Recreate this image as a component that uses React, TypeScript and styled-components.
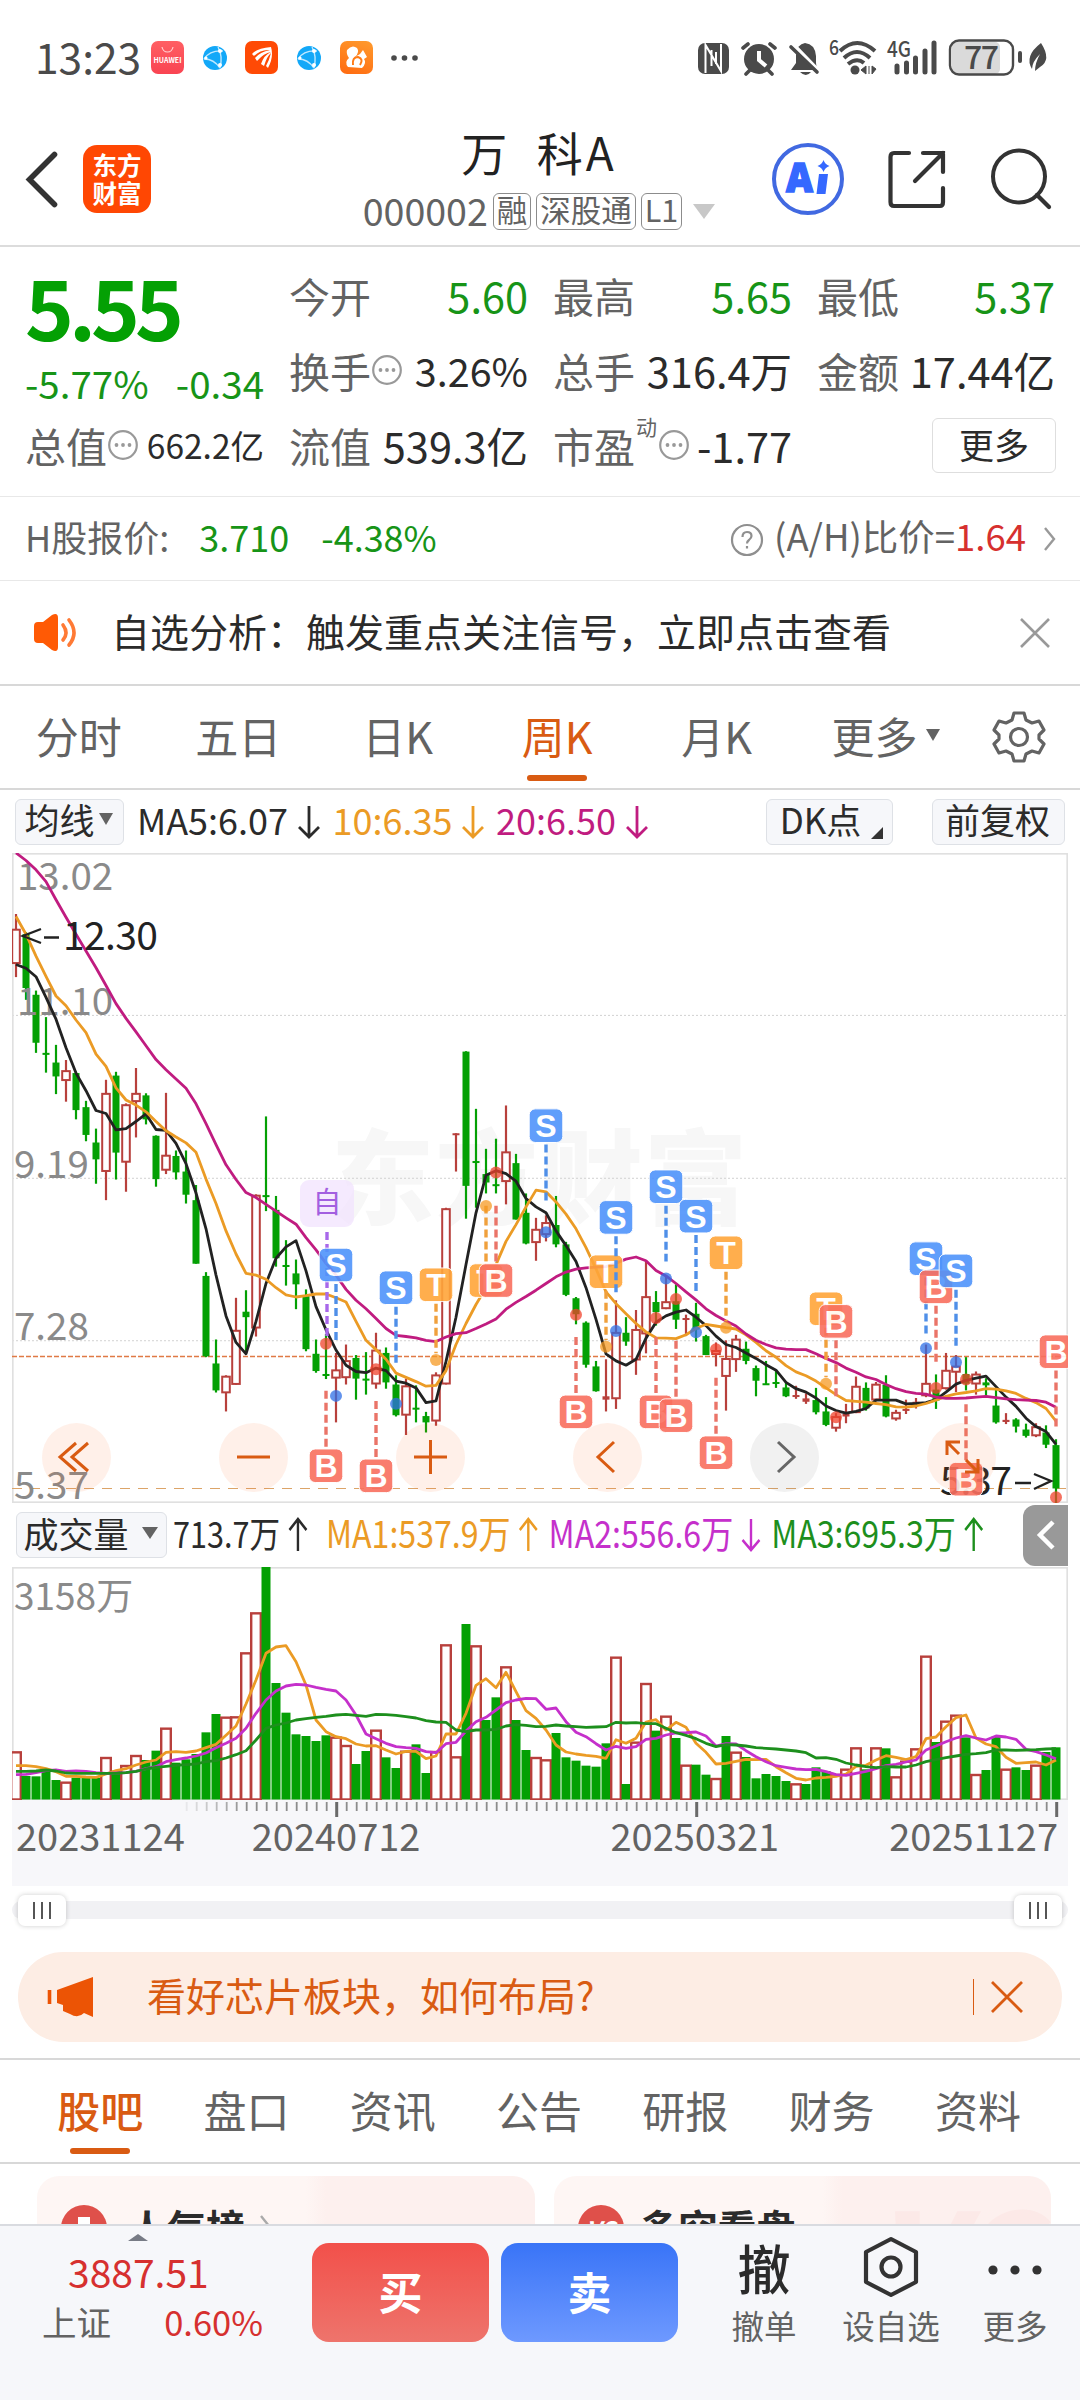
import React from 'react';
import styled, { createGlobalStyle } from 'styled-components';

const GREEN = '#04a004';
const TEXT_GREEN = '#179417';
const RED = '#b8403c';
const TEXT_RED = '#d6302f';
const ORANGE = '#d95b12';
const MA_ORANGE = '#eb9b25';
const MA_PINK = '#c01c80';
const MA_PURPLE = '#c530cb';
const DARK = '#2b2b2b';
const GRAY = '#636363';

const STEP = 10;
const FIRST_X = 16;
const toX = (i: number) => FIRST_X + i * STEP;
const priceY = (v: number) => 850 + v / 2.376;
const volumeY = (v: number) => 1500 + v / 3;

type Candle = [string, number, number, number, number];

// direction, high, body top, body bottom, low
const CANDLES: Candle[] = [
  ['r', 152, 187, 271, 302], ['g', 195, 200, 328, 356], ['g', 334, 344, 458, 482],
  ['g', 397, 482, 485, 529], ['g', 463, 505, 538, 580], ['r', 499, 523, 549, 598],
  ['g', 527, 530, 618, 640], ['g', 596, 611, 677, 692], ['g', 662, 695, 735, 793],
  ['r', 546, 577, 765, 832], ['g', 527, 536, 719, 783], ['r', 602, 604, 743, 812],
  ['r', 518, 577, 599, 683], ['g', 578, 583, 640, 652], ['g', 678, 679, 782, 800],
  ['r', 577, 724, 762, 770], ['g', 714, 727, 766, 783], ['g', 714, 764, 819, 840],
  ['g', 796, 832, 983, 983], ['g', 1003, 1012, 1203, 1205], ['g', 1163, 1220, 1284, 1289],
  ['r', 1248, 1249, 1291, 1334], ['r', 1064, 1140, 1271, 1271], ['g', 1046, 1097, 1110, 1197],
  ['r', 818, 819, 1137, 1156], ['g', 633, 820, 824, 858], ['g', 822, 855, 970, 990],
  ['g', 927, 986, 989, 1035], ['g', 973, 1006, 1032, 1091], ['g', 1044, 1060, 1186, 1191],
  ['g', 1163, 1197, 1238, 1242], ['g', 1150, 1245, 1248, 1257], ['r', 1195, 1234, 1256, 1360],
  ['r', 1175, 1212, 1255, 1270], ['g', 1200, 1207, 1256, 1306], ['g', 1193, 1256, 1260, 1294],
  ['r', 1147, 1187, 1270, 1280], ['g', 1182, 1195, 1265, 1280], ['g', 1248, 1270, 1343, 1346],
  ['r', 1256, 1272, 1344, 1390], ['g', 1272, 1325, 1329, 1360], ['g', 1335, 1345, 1360, 1384],
  ['r', 1241, 1246, 1358, 1368], ['r', 850, 851, 1270, 1270], ['r', 673, 673, 676, 764],
  ['g', 478, 479, 798, 876], ['g', 615, 739, 743, 850], ['g', 710, 770, 790, 816],
  ['g', 686, 794, 797, 816], ['r', 607, 716, 789, 842], ['g', 722, 744, 878, 878],
  ['g', 816, 862, 935, 937], ['r', 874, 900, 934, 976], ['r', 868, 884, 915, 930],
  ['g', 822, 891, 937, 944], ['g', 931, 937, 1057, 1060], ['g', 1062, 1065, 1103, 1127],
  ['g', 1120, 1123, 1223, 1230], ['g', 1214, 1227, 1286, 1287], ['r', 1210, 1298, 1306, 1334],
  ['r', 1070, 1145, 1305, 1328], ['g', 1110, 1147, 1168, 1178], ['r', 1093, 1138, 1213, 1247],
  ['r', 975, 1060, 1151, 1196], ['g', 1048, 1074, 1098, 1130], ['r', 1010, 1072, 1091, 1091],
  ['g', 1032, 1072, 1116, 1138], ['r', 1104, 1112, 1116, 1155], ['g', 1076, 1102, 1139, 1168],
  ['g', 1152, 1155, 1200, 1200], ['r', 1170, 1188, 1200, 1227], ['r', 1165, 1207, 1252, 1332],
  ['r', 1152, 1161, 1212, 1240], ['g', 1168, 1185, 1214, 1222], ['g', 1225, 1231, 1261, 1298],
  ['g', 1214, 1267, 1270, 1270], ['g', 1238, 1264, 1268, 1278], ['g', 1264, 1277, 1298, 1300],
  ['r', 1273, 1295, 1298, 1304], ['r', 1291, 1303, 1311, 1316], ['g', 1278, 1307, 1336, 1341],
  ['g', 1300, 1334, 1366, 1369], ['r', 1338, 1345, 1375, 1382], ['r', 1316, 1340, 1346, 1362],
  ['r', 1251, 1273, 1338, 1338], ['g', 1265, 1278, 1327, 1332], ['r', 1264, 1268, 1308, 1310],
  ['g', 1248, 1271, 1346, 1348], ['r', 1330, 1335, 1353, 1356], ['r', 1306, 1328, 1332, 1340],
  ['r', 1302, 1311, 1315, 1327], ['r', 1175, 1266, 1298, 1300], ['g', 1246, 1282, 1308, 1328],
  ['r', 1195, 1235, 1281, 1282], ['r', 1200, 1225, 1242, 1288], ['g', 1205, 1245, 1268, 1284],
  ['r', 1239, 1244, 1270, 1294], ['g', 1255, 1265, 1272, 1302], ['g', 1282, 1320, 1360, 1363],
  ['r', 1338, 1354, 1359, 1364], ['g', 1350, 1353, 1370, 1384], ['g', 1363, 1377, 1392, 1396],
  ['r', 1362, 1369, 1393, 1395], ['g', 1367, 1384, 1413, 1421], ['g', 1400, 1414, 1517, 1552],
];

const MA5 = [
  272, 281, 301, 350, 402, 470, 530, 572, 619, 626, 665, 662, 645, 627, 664, 666, 697, 745, 815,
  900, 1010, 1107, 1170, 1197, 1120, 1030, 970, 943, 928, 1000, 1085, 1140, 1188, 1224, 1239, 1242,
  1231, 1237, 1262, 1267, 1278, 1313, 1309, 1215, 1110, 985, 862, 773, 762, 769, 787, 828, 848, 862,
  905, 940, 978, 1040, 1115, 1197, 1214, 1224, 1210, 1160, 1122, 1107, 1098, 1093, 1110, 1130, 1155,
  1175, 1182, 1195, 1208, 1223, 1236, 1265, 1280, 1288, 1302, 1321, 1332, 1338, 1334, 1327, 1307,
  1307, 1307, 1316, 1315, 1313, 1306, 1288, 1269, 1260, 1255, 1250, 1275, 1300, 1322, 1350, 1370,
  1382, 1412,
];

const MA10 = [
  158, 200, 252, 300, 347, 370, 404, 434, 485, 514, 565, 594, 606, 622, 645, 667, 682, 696, 718,
  782, 840, 905, 960, 1006, 1010, 1020, 1040, 1057, 1062, 1059, 1055, 1055, 1064, 1074, 1120, 1165,
  1187, 1210, 1243, 1253, 1263, 1274, 1272, 1237, 1175, 1125, 1080, 1040, 985, 930, 890, 848, 808,
  812, 836, 865, 900, 945, 995, 1050, 1078, 1102, 1125, 1145, 1159, 1160, 1161, 1152, 1137, 1127,
  1131, 1135, 1138, 1152, 1170, 1190, 1205, 1225, 1240, 1249, 1262, 1278, 1294, 1308, 1310, 1312,
  1315, 1318, 1323, 1324, 1321, 1315, 1307, 1298, 1292, 1289, 1285, 1280, 1281, 1285, 1291, 1303,
  1313, 1327, 1357,
];

const MA20 = [
  7, 25, 47, 75, 118, 160, 200, 240, 280, 322, 365, 400, 432, 465, 498, 522, 544, 566, 603, 650,
  700, 748, 783, 814, 826, 842, 858, 874, 889, 921, 950, 982, 1010, 1044, 1070, 1090, 1113, 1137,
  1153, 1156, 1159, 1165, 1168, 1157, 1149, 1147, 1137, 1126, 1114, 1091, 1075, 1061, 1046, 1030,
  1014, 1003, 996, 993, 991, 990, 982, 972, 967, 976, 999, 1012, 1030, 1050, 1069, 1090, 1106, 1119,
  1131, 1150, 1165, 1175, 1183, 1186, 1187, 1187, 1197, 1208, 1218, 1231, 1241, 1252, 1258, 1270,
  1280, 1287, 1291, 1293, 1300, 1303, 1303, 1302, 1300, 1298, 1301, 1304, 1306, 1307, 1308, 1312,
  1324,
];

const VOLUMES = [
  754, 828, 829, 812, 840, 845, 833, 830, 833, 771, 812, 795, 765, 780, 752, 683, 788, 778, 762,
  697, 642, 650, 649, 457, 337, 201, 549, 638, 703, 708, 723, 706, 710, 735, 792, 753, 689, 772,
  804, 752, 733, 819, 753, 433, 769, 372, 436, 660, 592, 499, 660, 750, 771, 778, 699, 772, 782,
  797, 800, 730, 470, 852, 725, 549, 692, 647, 714, 794, 794, 824, 834, 708, 755, 771, 835, 822,
  828, 843, 850, 852, 802, 813, 822, 806, 742, 808, 742, 745, 829, 782, 745, 467, 726, 662, 644,
  712, 822, 810, 710, 806, 802, 810, 794, 756, 742,
];

// hollow volume bars, by week
const VOLUME_UP = [
  0, 5, 9, 11, 12, 15, 21, 22, 23, 24, 32, 33, 36, 39, 42, 43, 44, 46, 49, 52, 53, 60, 62, 63, 65,
  67, 70, 72, 78, 82, 83, 84, 86, 88, 89, 90, 91, 93, 94, 96, 99, 102,
];

const VMA1 = [
  797, 797, 800, 806, 815, 829, 829, 831, 832, 822, 812, 806, 795, 786, 780, 757, 755, 757, 753,
  743, 733, 706, 678, 612, 540, 460, 441, 437, 485, 555, 660, 695, 710, 716, 732, 738, 737, 750,
  762, 754, 754, 776, 768, 702, 702, 640, 556, 536, 563, 517, 575, 632, 655, 690, 735, 756, 762,
  766, 769, 775, 719, 730, 715, 666, 659, 690, 667, 682, 730, 757, 792, 790, 784, 778, 779, 778,
  800, 818, 835, 840, 834, 832, 829, 822, 799, 796, 780, 767, 772, 779, 770, 716, 711, 680, 653,
  645, 714, 732, 740, 772, 790, 788, 786, 795, 780,
];

const VMA2 = [
  824, 823, 818, 812, 810, 814, 813, 814, 818, 820, 819, 818, 814, 806, 800, 785, 779, 774, 768,
  759, 743, 730, 715, 685, 640, 600, 573, 558, 553, 555, 562, 568, 573, 600, 645, 702, 716, 730,
  740, 743, 745, 755, 758, 731, 727, 693, 665, 652, 630, 608, 600, 595, 596, 628, 624, 665, 697,
  710, 731, 750, 739, 745, 740, 718, 715, 705, 699, 698, 696, 708, 738, 731, 732, 752, 770, 785,
  797, 802, 807, 809, 808, 815, 824, 826, 820, 814, 806, 797, 793, 786, 780, 750, 738, 725, 714,
  707, 714, 720, 708, 711, 718, 748, 755, 765, 776,
];

const VMA3 = [
  814, 814, 813, 810, 813, 819, 820, 820, 820, 820, 820, 818, 814, 807, 802, 799, 796, 794, 792,
  785, 782, 774, 764, 752, 720, 685, 675, 669, 660, 656, 652, 649, 645, 643, 646, 649, 643, 644,
  646, 650, 654, 662, 666, 667, 690, 695, 690, 690, 688, 678, 674, 676, 680, 679, 675, 678, 680,
  682, 681, 680, 667, 669, 668, 671, 671, 685, 698, 706, 716, 730, 740, 734, 735, 738, 743, 745,
  747, 750, 753, 758, 774, 773, 778, 789, 795, 800, 803, 800, 801, 801, 795, 785, 779, 773, 768,
  763, 761, 758, 750, 750, 751, 750, 749, 747, 746,
];

type Signal = { i: number; kind: 'S' | 'B' | 'T'; y: number; dot: number };

const SIGNALS: Signal[] = [
  { i: 32, kind: 'S', y: 986, dot: 1297 },
  { i: 31, kind: 'B', y: 1463, dot: 1173 },
  { i: 36, kind: 'B', y: 1487, dot: 1234 },
  { i: 38, kind: 'S', y: 1040, dot: 1316 },
  { i: 42, kind: 'T', y: 1033, dot: 1212 },
  { i: 47, kind: 'T', y: 1023, dot: 846 },
  { i: 48, kind: 'B', y: 1023, dot: 766 },
  { i: 53, kind: 'S', y: 655, dot: 908 },
  { i: 56, kind: 'B', y: 1335, dot: 1104 },
  { i: 59, kind: 'T', y: 1002, dot: 1180 },
  { i: 60, kind: 'S', y: 873, dot: 1143 },
  { i: 64, kind: 'B', y: 1335, dot: 1112 },
  { i: 65, kind: 'S', y: 800, dot: 1018 },
  { i: 66, kind: 'B', y: 1344, dot: 1067 },
  { i: 68, kind: 'S', y: 870, dot: 1146 },
  { i: 70, kind: 'B', y: 1432, dot: 1186 },
  { i: 71, kind: 'T', y: 957, dot: 1135 },
  { i: 81, kind: 'T', y: 1090, dot: 1268 },
  { i: 82, kind: 'B', y: 1120, dot: 1348 },
  { i: 91, kind: 'S', y: 971, dot: 1184 },
  { i: 92, kind: 'B', y: 1038, dot: 1278 },
  { i: 94, kind: 'S', y: 1000, dot: 1217 },
  { i: 95, kind: 'B', y: 1495, dot: 1258 },
  { i: 104, kind: 'B', y: 1192, dot: 1538 },
];

const SIGNAL_COLORS = { S: '#4f94fb', B: '#f96f5f', T: '#ffa63a' };
const LINE_COLORS = { S: '#4f8fe8', B: '#ea7468', T: '#f0a03c' };
const DOT_COLORS = { S: '#2f6fe6', B: '#f0432c', T: '#f59a23' };

const linePoints = (values: number[], scale: (v: number) => number) =>
  values.map((v, i) => `${toX(i)},${scale(v).toFixed(1)}`).join(' ');

const SignalMark: React.FC<{ signal: Signal }> = ({ signal }) => {
  const { i, kind, y, dot } = signal;
  const x = toX(i);
  const dir = dot > y ? 1 : -1;
  const length = kind === 'T' && dot > y ? 118 : 133;
  return (
    <g>
      <line
        x1={x}
        x2={x}
        y1={priceY(y + dir * 45)}
        y2={priceY(y + dir * (45 + length))}
        stroke={LINE_COLORS[kind]}
        strokeWidth={3.4}
        strokeDasharray="8 4"
      />
      <circle cx={x} cy={priceY(dot)} r={6} fill={DOT_COLORS[kind]} opacity={0.75} />
      <g opacity={0.9}>
        <rect
          x={x - 16.8}
          y={priceY(y) - 16.8}
          width={33.6}
          height={33.6}
          rx={6}
          fill={SIGNAL_COLORS[kind]}
          stroke="#fff"
          strokeWidth={1}
        />
        <text
          x={x}
          y={priceY(y) + 11.5}
          fill="#fff"
          fontSize={32}
          fontWeight={700}
          fontFamily='"Liberation Sans", sans-serif'
          textAnchor="middle"
        >
          {kind}
        </text>
      </g>
    </g>
  );
};

const PriceChart: React.FC = () => (
  <svg width="1056" height="650" viewBox="12 853 1056 650">
    <text x="331" y="1217" fontSize="103" fontWeight="900" fill="#f7f7f7" textLength="416">
      东方财富
    </text>
    {[393, 780, 1166].map((v) => (
      <line key={v} x1="12" x2="1068" y1={priceY(v)} y2={priceY(v)} stroke="#d2d2d2" strokeDasharray="2 2" />
    ))}
    <rect x="12.75" y="853.75" width="1054.5" height="648.5" fill="none" stroke="#e0e0e0" strokeWidth="1.8" />
    <line x1="12" x2="1068" y1="1356.5" y2="1356.5" stroke="#e07a45" strokeWidth="1.4" strokeDasharray="5 2" />
    <line x1="12" x2="1068" y1="1488.5" y2="1488.5" stroke="#dca468" strokeWidth="1.2" strokeDasharray="10 8" />
    {CANDLES.map(([dir, high, top, bottom, low], i) => {
      const x = toX(i);
      const color = dir === 'r' ? RED : GREEN;
      const y1 = priceY(top);
      const y2 = priceY(bottom);
      const flat = y2 - y1 < 4;
      return (
        <g key={i}>
          <line x1={x} x2={x} y1={priceY(high)} y2={priceY(low)} stroke={color} strokeWidth="2.2" />
          {dir === 'r' && !flat ? (
            <rect x={x - 3.8} y={y1 + 1} width="7.6" height={y2 - y1 - 2} fill="#fff" stroke={color} strokeWidth="2" />
          ) : (
            <rect x={x - 3.5} y={y1} width="7" height={Math.max(y2 - y1, 2)} fill={color} />
          )}
        </g>
      );
    })}
    <g fontSize="38.5" fill="#8a8a8a">
      <text x="17" y="890">13.02</text>
      <text x="17" y="1015">11.10</text>
      <text x="14" y="1178">9.19</text>
      <text x="14" y="1340">7.28</text>
      <text x="14" y="1499">5.37</text>
    </g>
    <g fill="none" strokeWidth="2.8" strokeLinejoin="round">
      <polyline points={linePoints(MA5, priceY)} stroke="#222" />
      <polyline points={linePoints(MA10, priceY)} stroke={MA_ORANGE} />
      <polyline points={linePoints(MA20, priceY)} stroke={MA_PINK} />
    </g>
    <g fontSize="39" fill="#222">
      <path d="M41 911L23 918L41 925M44 919.5H59" transform="translate(0 18)" fill="none" stroke="#222" strokeWidth="2.4" />
      <text x="63" y="950" textLength="95">12.30</text>
      <text x="940" y="1495" textLength="72">5.37</text>
      <path d="M1015 1483H1031M1034 1474L1051 1481L1034 1489" fill="none" stroke="#222" strokeWidth="2.4" />
    </g>
    <rect x="300" y="1180" width="54" height="47" rx="9" fill="#f1e3fe" opacity="0.75" />
    <text x="327" y="1213" fontSize="29" fill="#a35fe0" textAnchor="middle">
      自
    </text>
    <line x1="327" x2="327" y1="1232" y2="1336" stroke="#a868ea" strokeWidth="3.4" strokeDasharray="8 4" />
    {SIGNALS.map((s) => (
      <SignalMark key={s.i} signal={s} />
    ))}
  </svg>
);

const VolumeChart: React.FC = () => (
  <svg width="1056" height="233" viewBox="12 1567 1056 233">
    <rect x="12.75" y="1567.75" width="1054.5" height="231.5" fill="none" stroke="#e0e0e0" strokeWidth="1.8" />
    {VOLUMES.map((v, i) => {
      const up = VOLUME_UP.includes(i);
      const y = volumeY(v);
      return up ? (
        <rect key={i} x={toX(i) - 4.8} y={y + 1} width="9.6" height={1798.5 - y} fill="#fff" stroke={RED} strokeWidth="2.4" />
      ) : (
        <rect key={i} x={toX(i) - 4.5} y={y} width="9" height={1799.5 - y} fill={GREEN} />
      );
    })}
    <text x="14" y="1610" fontSize="37" fill="#8a8a8a">
      3158万
    </text>
    <g fill="none" strokeWidth="2.8" strokeLinejoin="round">
      <polyline points={linePoints(VMA1, volumeY)} stroke={MA_ORANGE} />
      <polyline points={linePoints(VMA2, volumeY)} stroke={MA_PURPLE} />
      <polyline points={linePoints(VMA3, volumeY)} stroke="#1d8f1d" />
    </g>
  </svg>
);

const AxisTicks: React.FC = () => (
  <svg width="1056" height="17" viewBox="12 1800 1056 17">
    {VOLUMES.map((_, i) => {
      const major = i === 32 || i === 68 || i === 104;
      if (i < 17) return null;
      return (
        <line
          key={i}
          x1={toX(i) + 0.7}
          x2={toX(i) + 0.7}
          y1="1802"
          y2={major ? 1817 : 1811}
          stroke={major ? '#6a6a6a' : '#8c8c8c'}
          strokeWidth={major ? 3 : 1.8}
          opacity={Math.min(1, (i - 16) / 7)}
        />
      );
    })}
  </svg>
);

const Arrow: React.FC<{ up?: boolean; color: string; width?: number }> = ({ up, color, width = 43.5 }) => (
  <svg width={width} height="36" viewBox={`0 0 ${width} 36`}>
    <path
      d={up ? 'M21 34V2M11 13L21 2L31 13' : 'M21 2V33M11 23L21 33L31 23'}
      fill="none"
      stroke={color}
      strokeWidth="2.8"
    />
  </svg>
);

const InfoDots: React.FC = () => (
  <svg width="32" height="32" viewBox="0 0 32 32">
    <circle cx="16" cy="14" r="13.800" fill="none" stroke="#999" strokeWidth="2.200" />
    <g fill="#999">
      <circle cx="9.500" cy="14" r="1.900" />
      <circle cx="16" cy="14" r="1.900" />
      <circle cx="22.500" cy="14" r="1.900" />
    </g>
  </svg>
);

const GlobeIcon: React.FC = () => (
  <svg width="24" height="24" viewBox="0 0 24 24">
    <circle cx="12" cy="12" r="12" fill="#13a8f8" />
    <path d="M1 13Q7 4 20 5M1 13Q11 13 17 22M15 1Q20 10 17 22" fill="none" stroke="#bfe8ff" strokeWidth="1.4" />
    <circle cx="17" cy="5" r="2" fill="#fff" />
    <circle cx="3" cy="12" r="1.6" fill="#fff" />
    <circle cx="17" cy="19" r="2" fill="#fff" />
  </svg>
);

const SystemIcons: React.FC = () => (
  <svg width="356" height="40" viewBox="696 38 356 40">
    <rect x="698" y="43" width="31" height="31" rx="7" fill="#4a4a4a" />
    <path d="M705.500 73V45L721 71V44M711.500 50V66M716 52V64" fill="none" stroke="#fff" strokeWidth="2" />
    <g fill="#4a4a4a" stroke="#4a4a4a" strokeLinecap="round">
      <circle cx="759" cy="59" r="15" stroke="none" />
      <path d="M743 48L748 44M775 48L770 44M746 74L750 70M772 74L768 70" strokeWidth="3.6" />
      <path d="M759 51V60L766 66" fill="none" stroke="#fff" strokeWidth="4" strokeLinecap="butt" />
      <path d="M791 70L796 63V55Q797 44 805 43Q815 44 816 56V63L817 70Z" stroke="none" />
      <path d="M800 72H811Q806 78 800 72Z" stroke="none" />
      <path d="M792 44L820 73" stroke="#fff" strokeWidth="5" />
      <path d="M791 47L817 72" strokeWidth="3.6" />
    </g>
    <g fill="none" stroke="#4a4a4a" strokeWidth="4">
      <path d="M840 51Q857 35 875 51" />
      <path d="M844 58Q857 46 870 58" />
      <path d="M848 64Q857 57 864 63" />
    </g>
    <circle cx="855" cy="70" r="4.500" fill="#4a4a4a" />
    <path d="M866 66V74L861 70ZM869 66V74M872 66V74L876 69Z" fill="#4a4a4a" stroke="#4a4a4a" strokeWidth="1" />
    <g fill="#4a4a4a" fontWeight="500">
      <text x="829" y="55" fontSize="20" textLength="10" lengthAdjust="spacingAndGlyphs">6</text>
      <text x="887" y="57" fontSize="22" textLength="24" lengthAdjust="spacingAndGlyphs">4G</text>
    </g>
    <path d="M897 66V72M906.500 63V72M915.500 58V72M925 51V72M934 43V72" stroke="#4a4a4a" strokeWidth="5" strokeLinecap="round" />
    <rect x="952" y="42" width="48" height="32" rx="5" fill="#dadada" />
    <rect x="950" y="40.500" width="63" height="34" rx="9" fill="none" stroke="#4a4a4a" strokeWidth="2.4" />
    <path d="M1020 53V61" stroke="#4a4a4a" strokeWidth="4" strokeLinecap="round" />
    <text x="964" y="69" fontSize="32" fontWeight="500" fill="#4a4a4a" textLength="35">
      77
    </text>
    <path d="M1041 43Q1052 60 1040 67L1035 71Q1035 63 1040 54Q1032 62 1032 69Q1024 56 1041 43Z" fill="#4a4a4a" />
  </svg>
);

const SITE_TABS = ['股吧', '盘口', '资讯', '公告', '研报', '财务', '资料'];
const PERIODS = ['分时', '五日', '日K', '周K', '月K'];

export default function App() {
  return (
    <Page>
      <GlobalStyle />
      <StatusBar>
        <Clock>13:23</Clock>
        <AppBadges>
          <AppBadge $bg="linear-gradient(#ff5f63, #f94452)">
            <svg width="33" height="33" viewBox="0 0 33 33">
              <path d="M11 6Q12 11 16.500 11Q21 11 22 6" fill="none" stroke="#ffd0d0" strokeWidth="1.200" />
              <text x="16.500" y="21.500" fontSize="7" fontWeight="700" fill="#fff" textAnchor="middle">
                HUAWEI
              </text>
            </svg>
          </AppBadge>
          <GlobeIcon />
          <AppBadge $bg="#ff4a05">
            <svg width="33" height="33" viewBox="0 0 33 33">
              <path
                d="M26 6Q12 7 7 13L9 15Q16 8 25 9Q15 11 10 17L12 20Q19 12 26 11Q19 14 16 23L19 25Q22 15 26 12Q24 20 21 25L23 27Q29 16 26 6Z"
                fill="#fff"
              />
            </svg>
          </AppBadge>
          <GlobeIcon />
          <AppBadge $bg="linear-gradient(200deg, #ff9b2e, #ff6a10)">
            <svg width="33" height="33" viewBox="0 0 33 33">
              <path
                d="M8 26Q4 21 9 17Q6 13 7 9Q12 3 17 7Q20 11 15 16L20 13L23 9L27 16L24 18Q27 22 22 27Z"
                fill="#fff"
              />
              <path d="M13 24Q12 16 18 16Q24 18 20 24" fill="none" stroke="#ff7a14" strokeWidth="2" />
            </svg>
          </AppBadge>
          <svg width="28" height="8" viewBox="0 0 28 8" fill="#4a4a4a">
            <circle cx="4" cy="4" r="2.800" />
            <circle cx="14.500" cy="4" r="2.800" />
            <circle cx="25" cy="4" r="2.800" />
          </svg>
        </AppBadges>
        <SystemIcons />
      </StatusBar>

      <Header>
        <HeaderLeft>
          <svg width="36" height="68" viewBox="0 0 36 68">
            <path d="M31.500 9.500L6.500 34.500L31.500 59.500" fill="none" stroke="#333" strokeWidth="5.600" strokeLinecap="round" />
          </svg>
          <Logo>
            <span>东方</span>
            <span>财富</span>
          </Logo>
        </HeaderLeft>
        <HeaderTitle>
          <StockName>万 科A</StockName>
          <StockMeta>
            <Code>000002</Code>
            <Tag>融</Tag>
            <Tag>深股通</Tag>
            <Tag>L1</Tag>
            <Triangle $size={11} $height={15} $color="#c8c8c8" $left={6} />
          </StockMeta>
        </HeaderTitle>
        <HeaderRight>
          <svg width="72" height="72" viewBox="0 0 72 72">
            <circle cx="36" cy="36" r="34" fill="none" stroke="#4169e1" strokeWidth="4" />
            <g fill="#3568ff">
              <text
                x="14"
                y="49"
                fontSize="41"
                fontWeight="900"
                fontFamily='"Noto Sans", sans-serif'
                textLength="27"
                lengthAdjust="spacingAndGlyphs"
                stroke="#3568ff"
                strokeWidth="1.500"
              >
                A
              </text>
              <path d="M47 31H56L53.500 51H44.500Z" />
              <path d="M51.500 17Q53 21.500 57.500 23Q53 24.500 51.500 29Q50 24.500 45.500 23Q50 21.500 51.500 17Z" />
            </g>
          </svg>
          <svg width="60" height="60" viewBox="0 0 60 60">
            <path
              d="M22 4H7Q3.500 4 3.500 8V53Q3.500 57 7 57H53Q56 57 56 53V39M36 4H56V23M56 4L28 32"
              fill="none"
              stroke="#333"
              strokeWidth="4.200"
              strokeLinecap="round"
            />
          </svg>
          <svg width="62" height="62" viewBox="0 0 62 62">
            <circle cx="29" cy="28.500" r="26" fill="none" stroke="#333" strokeWidth="4" />
            <path d="M47 47L59 59" stroke="#333" strokeWidth="4.200" strokeLinecap="round" />
          </svg>
        </HeaderRight>
      </Header>

      <Quote>
        <QuoteMain>
          <Price>5.55</Price>
          <Change>
            <span>-5.77%</span>
            <span>-0.34</span>
          </Change>
          <Cell>
            <Label>总值</Label>
            <InfoDots />
            <Value $size={33.5}>662.2亿</Value>
          </Cell>
        </QuoteMain>
        <QuoteGrid>
          <Cell>
            <Label>今开</Label>
            <Value $color={TEXT_GREEN}>5.60</Value>
          </Cell>
          <Cell>
            <Label>最高</Label>
            <Value $color={TEXT_GREEN}>5.65</Value>
          </Cell>
          <Cell>
            <Label>最低</Label>
            <Value $color={TEXT_GREEN}>5.37</Value>
          </Cell>
          <Cell>
            <Label>换手</Label>
            <InfoDots />
            <Value $size={39.5}>3.26%</Value>
          </Cell>
          <Cell>
            <Label>总手</Label>
            <Value>316.4万</Value>
          </Cell>
          <Cell>
            <Label>金额</Label>
            <Value>17.44亿</Value>
          </Cell>
          <Cell>
            <Label>流值</Label>
            <Value>539.3亿</Value>
          </Cell>
          <Cell>
            <Label>市盈</Label>
            <Dynamic>动</Dynamic>
            <InfoDots />
            <Value>-1.77</Value>
          </Cell>
          <Cell>
            <MoreButton>更多</MoreButton>
          </Cell>
        </QuoteGrid>
      </Quote>

      <HShare>
        <span>H股报价:</span>
        <HPrice>3.710</HPrice>
        <HPrice>-4.38%</HPrice>
        <Ratio>
          <svg width="34" height="38" viewBox="0 -1 34 38">
            <circle cx="17" cy="19" r="15" fill="none" stroke="#8f8f8f" strokeWidth="2.200" />
            <path d="M12.500 16Q12.500 11 17 11Q21.500 11 21.500 15Q21.500 17 19 19Q17 20.500 17 22.500M17 25V27.500" fill="none" stroke="#8f8f8f" strokeWidth="2.200" />
          </svg>
          <span>(A/H)比价=</span>
          <RatioValue>1.64</RatioValue>
          <svg width="14" height="26" viewBox="0 0 14 26">
            <path d="M2 2L11 13L2 24" fill="none" stroke="#999" strokeWidth="2.400" />
          </svg>
        </Ratio>
      </HShare>

      <Notice>
        <svg width="48" height="40" viewBox="0 0 48 40">
          <path d="M1 13Q1 9 5 9H10L19 2Q25 -1 25 5V34Q25 40 19 37L10 30H5Q1 30 1 26Z" fill="#ff5a05" />
          <path d="M30 12Q36 20 30 27M36 7Q46 20 36 32" fill="none" stroke="#ff7a35" strokeWidth="3.600" strokeLinecap="round" />
        </svg>
        <NoticeText>自选分析：触发重点关注信号，立即点击查看</NoticeText>
        <svg width="32" height="32" viewBox="0 0 32 32">
          <path d="M2 2L30 30M30 2L2 30" stroke="#999" strokeWidth="2.600" />
        </svg>
      </Notice>

      <PeriodTabs>
        {PERIODS.map((name) => (
          <PeriodTab key={name} $active={name === '周K'}>
            {name}
          </PeriodTab>
        ))}
        <PeriodMore>
          更多
          <Triangle $size={7} $height={12} $color={GRAY} $left={8} />
        </PeriodMore>
        <svg width="54" height="54" viewBox="0 0 54 54">
          <path
            d="M22 3H32L34 10L40 13L47 11L52 20L47 25V29L52 34L47 43L40 41L34 44L32 51H22L20 44L14 41L7 43L2 34L7 29V25L2 20L7 11L14 13L20 10Z"
            fill="none"
            stroke={GRAY}
            strokeWidth="3.200"
            strokeLinejoin="round"
          />
          <circle cx="27" cy="27" r="8.500" fill="none" stroke={GRAY} strokeWidth="3.200" />
        </svg>
      </PeriodTabs>

      <MaRow>
        <SmallButton $width={109}>
          均线
          <Triangle $size={7} $height={12} $color={GRAY} $left={4} />
        </SmallButton>
        <MaLegend>
          <MaText $color={DARK}>MA5:6.07</MaText>
          <Arrow color={DARK} width={44.5} />
          <MaText $color={MA_ORANGE}>10:6.35</MaText>
          <Arrow color={MA_ORANGE} />
          <MaText $color={MA_PINK}>20:6.50</MaText>
          <Arrow color={MA_PINK} />
        </MaLegend>
        <SmallButton $width={127}>
          DK点
          <Corner />
        </SmallButton>
        <SmallButton $width={133}>前复权</SmallButton>
      </MaRow>

      <ChartArea>
        <PriceChart />
        <ChartControls>
          <Control>
            <path d="M42 20L26 34L42 48M30 20L14 34L30 48" transform="translate(4 0)" />
          </Control>
          <Control>
            <path d="M18 34H51" />
          </Control>
          <Control>
            <path d="M18 34H51M34.500 17V51" />
          </Control>
          <Control>
            <path d="M41 19L25 34L41 49" />
          </Control>
          <Control gray>
            <path d="M28 19L44 34L28 49" />
          </Control>
          <Control>
            <path d="M20 32V19H33M20 19L32 31M51 36V49H38M51 49L39 37" />
          </Control>
        </ChartControls>
      </ChartArea>

      <VolumeRow>
        <SmallButton $width={151}>
          成交量
          <Triangle $size={8} $height={12} $color={GRAY} $left={13} />
        </SmallButton>
        <VolumeLegend>
          <MaText $color={DARK}>713.7万</MaText>
          <Arrow up width={54} color={DARK} />
          <MaText $color={MA_ORANGE} $size={37.8}>MA1:537.9万</MaText>
          <Arrow up width={44.5} color={MA_ORANGE} />
          <MaText $color={MA_PURPLE} $size={37.8}>MA2:556.6万</MaText>
          <Arrow width={44.5} color={MA_PURPLE} />
          <MaText $color="#1d8f1d" $size={37.8}>MA3:695.3万</MaText>
          <Arrow up width={44.5} color="#1d8f1d" />
        </VolumeLegend>
        <SideHandle>
          <svg width="20" height="32" viewBox="0 0 20 32">
            <path d="M17 3L4 16L17 29" fill="none" stroke="#fff" strokeWidth="4.500" />
          </svg>
        </SideHandle>
      </VolumeRow>

      <ChartArea>
        <VolumeChart />
      </ChartArea>
      <Axis>
        <AxisTicks />
        <AxisDates>
          <span>20231124</span>
          <span>20240712</span>
          <span>20250321</span>
          <span>20251127</span>
        </AxisDates>
      </Axis>

      <Slider>
        <Thumb>
          <i />
          <i />
          <i />
        </Thumb>
        <Thumb>
          <i />
          <i />
          <i />
        </Thumb>
      </Slider>

      <Banner>
        <svg width="46" height="40" viewBox="0 0 46 40">
          <path d="M1.500 13V27" stroke="#ec5405" strokeWidth="3.600" />
          <path d="M9 13L45 0V40L36 36Q30 42 22 37L15 34V28L9 26Z" fill="#ec5405" />
        </svg>
        <BannerText>看好芯片板块，如何布局?</BannerText>
        <BannerRule />
        <svg width="34" height="34" viewBox="0 0 34 34">
          <path d="M2 2L32 32M32 2L2 32" stroke={ORANGE} strokeWidth="2.800" />
        </svg>
      </Banner>

      <SiteTabs>
        {SITE_TABS.map((name, i) => (
          <SiteTab key={name} $active={i === 0}>
            {name}
          </SiteTab>
        ))}
      </SiteTabs>

      <Cards>
        <Card>
          <CardIcon>
            <svg width="46" height="46" viewBox="0 0 46 46">
              <path d="M17 12H29V34H17Z" fill="#fff" />
            </svg>
          </CardIcon>
          <CardTitle>人气榜</CardTitle>
          <svg width="12" height="24" viewBox="0 0 12 24">
            <path d="M2 2L10 12L2 22" fill="none" stroke="#aaa" strokeWidth="2.400" />
          </svg>
        </Card>
        <Card>
          <CardIcon>VS</CardIcon>
          <CardTitle>多空看盘</CardTitle>
          <CardGhost>VS</CardGhost>
        </Card>
      </Cards>

      <BottomBar>
        <IndexBox>
          <UpTriangle />
          <IndexValue>3887.51</IndexValue>
          <IndexRow>
            <span>上证</span>
            <IndexChange>0.60%</IndexChange>
          </IndexRow>
        </IndexBox>
        <TradeButton $bg="linear-gradient(#f2504a, #ee746c)">买</TradeButton>
        <TradeButton $bg="linear-gradient(#3974f7, #6e99ff)">卖</TradeButton>
        <Action $width={96}>
          <ActionGlyph>撤</ActionGlyph>
          <span>撤单</span>
        </Action>
        <Action $width={160}>
          <svg width="56" height="60" viewBox="0 0 56 60">
            <path d="M28 1L53 14V44L28 57L3 44V14Z" fill="none" stroke="#333" strokeWidth="4.200" strokeLinejoin="round" />
            <circle cx="28" cy="29" r="9.500" fill="none" stroke="#333" strokeWidth="4.200" />
          </svg>
          <span>设自选</span>
        </Action>
        <Action $width={90}>
          <svg width="56" height="60" viewBox="0 0 56 60" fill="#333">
            <circle cx="6" cy="32" r="4.600" />
            <circle cx="28" cy="32" r="4.600" />
            <circle cx="50" cy="32" r="4.600" />
          </svg>
          <span>更多</span>
        </Action>
      </BottomBar>
    </Page>
  );
}

function Control({ children, gray }: { children: React.ReactNode; gray?: boolean }) {
  return (
    <ControlButton $gray={gray}>
      <svg width="69" height="69" viewBox="0 0 69 69" fill="none" stroke={gray ? '#666' : ORANGE} strokeWidth="3">
        {children}
      </svg>
    </ControlButton>
  );
}

const GlobalStyle = createGlobalStyle`
  * {
    box-sizing: border-box;
  }

  body {
    margin: 0;
    background: #fff;
    font-family: "Noto Sans CJK SC", "Noto Sans", sans-serif;
    color: ${DARK};
  }

  svg {
    display: block;
    flex: none;
    overflow: visible;
  }

  button {
    padding: 0;
    border: none;
    font-family: inherit;
    color: inherit;
  }
`;

const Page = styled.div`
  width: 1080px;
  height: 2400px;
  overflow: hidden;
  display: flex;
  flex-direction: column;
  white-space: nowrap;

  & > * {
    flex: none;
  }
`;

const StatusBar = styled.div`
  height: 113px;
  padding: 2px 28px 0 35px;
  display: flex;
  align-items: center;
`;

const Clock = styled.div`
  width: 116px;
  padding-bottom: 3px;
  font-size: 42.5px;
  line-height: 50px;
  color: #4a4a4a;
`;

const AppBadges = styled.div`
  display: flex;
  align-items: center;
  gap: 18.7px;
  margin-right: auto;

  & > :last-child {
    margin-left: -1px;
  }
`;

const AppBadge = styled.div<{ $bg: string }>`
  width: 33px;
  height: 33px;
  border-radius: 7px;
  background: ${(props) => props.$bg};
`;

const Header = styled.header`
  height: 134px;
  display: flex;
  border-bottom: 2px solid #dcdcdc;
`;

const HeaderLeft = styled.div`
  width: 320px;
  padding: 32px 0 0 23px;
  display: flex;
  gap: 24px;
`;

const Logo = styled.div`
  width: 68px;
  height: 68px;
  padding-top: 6px;
  border-radius: 14px;
  background: #ff4703;
  color: #fff;
  font-size: 24.5px;
  font-weight: 700;
  line-height: 28px;
  display: flex;
  flex-direction: column;
  align-items: center;
`;

const HeaderTitle = styled.div`
  flex: 1;
  display: flex;
  flex-direction: column;
  align-items: center;
  padding-right: 2px;
`;

const StockName = styled.h1`
  margin: 13px 0 0;
  font-size: 46px;
  font-weight: 400;
  line-height: 50px;
  letter-spacing: 3px;
  word-spacing: 13px;
  color: #222;
`;

const StockMeta = styled.div`
  margin-top: 13px;
  display: flex;
  align-items: center;
  gap: 5px;
`;

const Code = styled.span`
  padding-bottom: 2px;
  font-size: 37.6px;
  line-height: 42px;
  color: ${GRAY};
`;

const Tag = styled.span`
  height: 37px;
  padding: 0 3px;
  border: 1.5px solid #8c8c8c;
  border-radius: 6px;
  font-size: 30.5px;
  line-height: 31px;
  color: ${GRAY};
`;

const Triangle = styled.i<{ $size: number; $height: number; $color: string; $left: number }>`
  display: inline-block;
  margin-left: ${(props) => props.$left}px;
  border-left: ${(props) => props.$size}px solid transparent;
  border-right: ${(props) => props.$size}px solid transparent;
  border-top: ${(props) => props.$height}px solid ${(props) => props.$color};
`;

const HeaderRight = styled.div`
  width: 320px;
  padding: 0 28px 1px 0;
  display: flex;
  align-items: center;
  justify-content: flex-end;
  gap: 43px;
`;

const Quote = styled.section`
  height: 250px;
  padding: 12.5px 25px 0 25px;
  display: flex;
  gap: 25px;
  border-bottom: 1.5px solid #e8e8e8;
`;

const QuoteMain = styled.div`
  width: 239px;
`;

const Price = styled.div`
  height: 100px;
  font-size: 83px;
  font-weight: 700;
  line-height: 91px;
  letter-spacing: -5px;
  color: ${GREEN};
`;

const Change = styled.div`
  height: 50px;
  display: flex;
  justify-content: space-between;
  font-size: 38.5px;
  line-height: 45px;
  color: ${TEXT_GREEN};
`;

const QuoteGrid = styled.div`
  flex: 1;
  display: grid;
  grid-template-columns: 239px 239px 238px;
  grid-auto-rows: 75px;
  column-gap: 25px;
`;

const Cell = styled.div`
  height: 75px;
  display: flex;
  align-items: center;
`;

const Label = styled.span`
  padding-bottom: 5px;
  font-size: 41px;
  line-height: 60px;
  color: ${GRAY};
`;

const Value = styled.span<{ $color?: string; $size?: number }>`
  margin-left: auto;
  padding-bottom: 5px;
  font-size: ${(props) => props.$size || 41.5}px;
  line-height: 60px;
  color: ${(props) => props.$color || DARK};
`;

const Dynamic = styled.sup`
  align-self: flex-start;
  margin: 2px 1px 0;
  font-size: 21px;
  line-height: 28px;
  color: ${GRAY};
`;

const MoreButton = styled.button`
  width: 124px;
  height: 55px;
  margin: 0 -1px 3px auto;
  border: 1.5px solid #dedede;
  border-radius: 6px;
  background: #fff;
  font-size: 35px;
  line-height: 48px;
  padding-bottom: 3px;
`;

const HShare = styled.div`
  height: 84px;
  padding: 0 23px 0 25px;
  display: flex;
  align-items: center;
  font-size: 36px;
  line-height: 72px;
  color: ${GRAY};
  border-bottom: 1.5px solid #e8e8e8;

  & span {
    padding-bottom: 6px;
  }
`;

const HPrice = styled.span`
  margin-left: 30px;
  color: ${TEXT_GREEN};

  & + & {
    margin-left: 32px;
  }
`;

const Ratio = styled.div`
  margin-left: auto;
  display: flex;
  align-items: center;
  font-size: 36.5px;

  & > svg:first-child {
    margin-right: 10px;
  }
`;

const RatioValue = styled.span`
  margin-right: 17px;
  color: ${TEXT_RED};
`;

const Notice = styled.div`
  height: 105px;
  padding: 0 29px 0 33px;
  display: flex;
  align-items: center;
  border-bottom: 2px solid #d8d8d8;
`;

const NoticeText = styled.span`
  margin: 0 auto 0 30px;
  padding-bottom: 6px;
  font-size: 39px;
  line-height: 60px;
`;

const PeriodTabs = styled.nav`
  height: 104px;
  padding-right: 34px;
  display: flex;
  align-items: center;
  border-bottom: 2px solid #d8d8d8;
`;

const PeriodTab = styled.div<{ $active: boolean }>`
  width: 159.5px;
  height: 102px;
  padding-right: 2px;
  text-align: center;
  font-size: 43px;
  line-height: 99px;
  color: ${(props) => (props.$active ? ORANGE : GRAY)};

  &::after {
    content: '';
    display: ${(props) => (props.$active ? 'block' : 'none')};
    width: 60px;
    height: 6px;
    margin: -10px auto 0;
    border-radius: 3px;
    background: ${ORANGE};
  }
`;

const PeriodMore = styled.div`
  margin: 0 auto 0 34px;
  padding-bottom: 4px;
  display: flex;
  align-items: center;
  font-size: 43px;
  line-height: 98px;
  color: ${GRAY};
`;

const MaRow = styled.div`
  height: 63px;
  padding: 0 15px;
  display: flex;
  align-items: center;
`;

const SmallButton = styled.button<{ $width: number }>`
  width: ${(props) => props.$width}px;
  height: 46px;
  padding: 0 2px 5px 0;
  display: flex;
  flex: none;
  align-items: center;
  justify-content: center;
  border: 1.5px solid #dee1e6;
  border-radius: 6px;
  background: #f6f7fa;
  font-size: 35px;
  line-height: 38px;

  & + & {
    margin-left: 39px;
  }
`;

const Corner = styled.i`
  align-self: flex-end;
  margin: 0 -6px 0 10px;
  border-left: 12px solid transparent;
  border-bottom: 12px solid #333;
`;

const MaLegend = styled.div`
  margin: 0 auto 0 13px;
  display: flex;
  align-items: center;
`;

const MaText = styled.span<{ $color: string; $size?: number }>`
  padding-bottom: 6px;
  font-size: ${(props) => props.$size || 36}px;
  line-height: 50px;
  color: ${(props) => props.$color};
`;

const ChartArea = styled.div`
  position: relative;
  margin: 0 12px;

  & > svg {
    overflow: hidden;
  }
`;

const ChartControls = styled.div`
  position: absolute;
  left: 30px;
  bottom: 11px;
  display: flex;
  gap: 108px;
`;

const ControlButton = styled.button<{ $gray?: boolean }>`
  width: 69px;
  height: 69px;
  border-radius: 50%;
  background: ${(props) => (props.$gray ? 'rgba(120, 120, 120, 0.1)' : 'rgba(255, 105, 40, 0.1)')};
`;

const VolumeRow = styled.div`
  height: 64px;
  padding: 0 12px 0 16px;
  display: flex;
  align-items: center;
`;

const VolumeLegend = styled.div`
  width: 820px;
  margin-left: 6px;
  display: flex;
  align-items: center;
  transform: scaleX(0.85);
  transform-origin: left center;
`;

const SideHandle = styled.div`
  width: 45px;
  height: 61px;
  margin-left: auto;
  display: flex;
  align-items: center;
  justify-content: center;
  border-radius: 12px 0 0 12px;
  background: #999;
`;

const Axis = styled.div`
  height: 86px;
  margin: 0 12px;
  background: #f7f7fa;
`;

const AxisDates = styled.div`
  display: flex;
  padding: 0 10px 0 4px;
  font-size: 38px;
  line-height: 36px;
  color: ${GRAY};

  span:nth-child(2) {
    margin-left: 67px;
  }

  span:nth-child(3) {
    margin: 0 auto 0 190px;
  }
`;

const Slider = styled.div`
  height: 18px;
  margin: 15px 12px 0;
  padding: 0 6px;
  display: flex;
  align-items: center;
  justify-content: space-between;
  border-radius: 9px;
  background: #f1f1f4;
`;

const Thumb = styled.div`
  width: 48px;
  height: 31px;
  display: flex;
  align-items: center;
  justify-content: center;
  gap: 6px;
  border-radius: 7px;
  background: #fff;
  box-shadow: 0 0 5px rgba(0, 0, 0, 0.2);

  i {
    width: 2px;
    height: 17px;
    background: #555;
  }
`;

const Banner = styled.div`
  height: 90px;
  margin: 33px 18px 0 18px;
  padding: 0 38px 0 30px;
  display: flex;
  align-items: center;
  border-radius: 45px;
  background: #fdede4;
  color: ${ORANGE};
`;

const BannerText = styled.span`
  margin: 0 auto 0 53px;
  padding-bottom: 6px;
  font-size: 39px;
  line-height: 60px;
`;

const BannerRule = styled.i`
  width: 1.5px;
  height: 36px;
  margin-right: 16px;
  background: ${ORANGE};
`;

const SiteTabs = styled.nav`
  height: 106px;
  margin-top: 16px;
  padding-left: 27px;
  display: flex;
  border-top: 2px solid #d8d8d8;
  border-bottom: 2px solid #d8d8d8;
`;

const SiteTab = styled.div<{ $active: boolean }>`
  width: 146.3px;
  text-align: center;
  font-size: 43px;
  font-weight: ${(props) => (props.$active ? 500 : 400)};
  line-height: 99px;
  color: ${(props) => (props.$active ? ORANGE : GRAY)};

  &::after {
    content: '';
    display: ${(props) => (props.$active ? 'block' : 'none')};
    width: 60px;
    height: 6px;
    margin: -11px auto 0;
    border-radius: 3px;
    background: ${ORANGE};
  }
`;

const Cards = styled.div`
  height: 60px;
  padding: 12px 29px 0 37px;
  display: flex;
  gap: 19px;
  overflow: hidden;
`;

const Card = styled.div`
  flex: 1;
  height: 120px;
  padding: 29px 0 0 24px;
  display: flex;
  align-items: flex-start;
  border-radius: 22px;
  overflow: hidden;
  background: linear-gradient(90deg, #fef6f4 0 54%, #fdf0ee 58%);

  & > svg {
    margin: 9px 0 0 14px;
  }
`;

const CardIcon = styled.div`
  width: 46px;
  height: 46px;
  border-radius: 50%;
  background: #df504a;
  color: #fff;
  text-align: center;
  font-size: 24px;
  font-style: italic;
  font-weight: 700;
  line-height: 48px;
`;

const CardTitle = styled.span`
  margin-left: 21px;
  font-size: 39px;
  font-weight: 700;
  line-height: 42px;

  ${Card} + ${Card} & {
    margin-left: 16px;
  }
`;

const CardGhost = styled.span`
  margin: -14px 14px 0 auto;
  font-size: 130px;
  font-weight: 900;
  font-style: italic;
  line-height: 120px;
  color: #fce9e7;
`;

const BottomBar = styled.footer`
  height: 176px;
  display: flex;
  border-top: 2px solid #d9dbe0;
  background: #f6f7fa;
`;

const IndexBox = styled.div`
  width: 312px;
  padding: 8px 0 0 42px;
`;

const UpTriangle = styled.i`
  display: block;
  width: 0;
  margin-left: 86px;
  border-left: 10px solid transparent;
  border-right: 10px solid transparent;
  border-bottom: 7px solid #777b85;
`;

const IndexValue = styled.div`
  margin: 7px 0 0 26px;
  font-size: 39px;
  line-height: 46px;
  color: ${TEXT_RED};
`;

const IndexRow = styled.div`
  width: 221px;
  margin-top: 4px;
  display: flex;
  justify-content: space-between;
  font-size: 34.5px;
  line-height: 46px;
  color: ${GRAY};
`;

const IndexChange = styled.span`
  color: ${TEXT_RED};
`;

const TradeButton = styled.button<{ $bg: string }>`
  width: 177px;
  height: 99px;
  margin: 17px 12px 0 0;
  padding-bottom: 4px;
  border-radius: 17px;
  background: ${(props) => props.$bg};
  color: #fff;
  font-size: 44px;
  font-weight: 700;
  line-height: 94px;
`;

const Action = styled.div<{ $width: number }>`
  width: ${(props) => props.$width}px;
  padding-top: 12px;
  display: flex;
  flex-direction: column;
  align-items: center;
  font-size: 32.5px;
  line-height: 40px;
  color: ${GRAY};

  & > span:last-child {
    margin-top: 7px;
  }

  ${TradeButton} + & {
    margin-left: 26px;
  }

  & + & {
    margin-left: -1px;
  }
`;

const ActionGlyph = styled.span`
  height: 60px;
  font-size: 53px;
  font-weight: 500;
  line-height: 58px;
  color: ${DARK};
`;
